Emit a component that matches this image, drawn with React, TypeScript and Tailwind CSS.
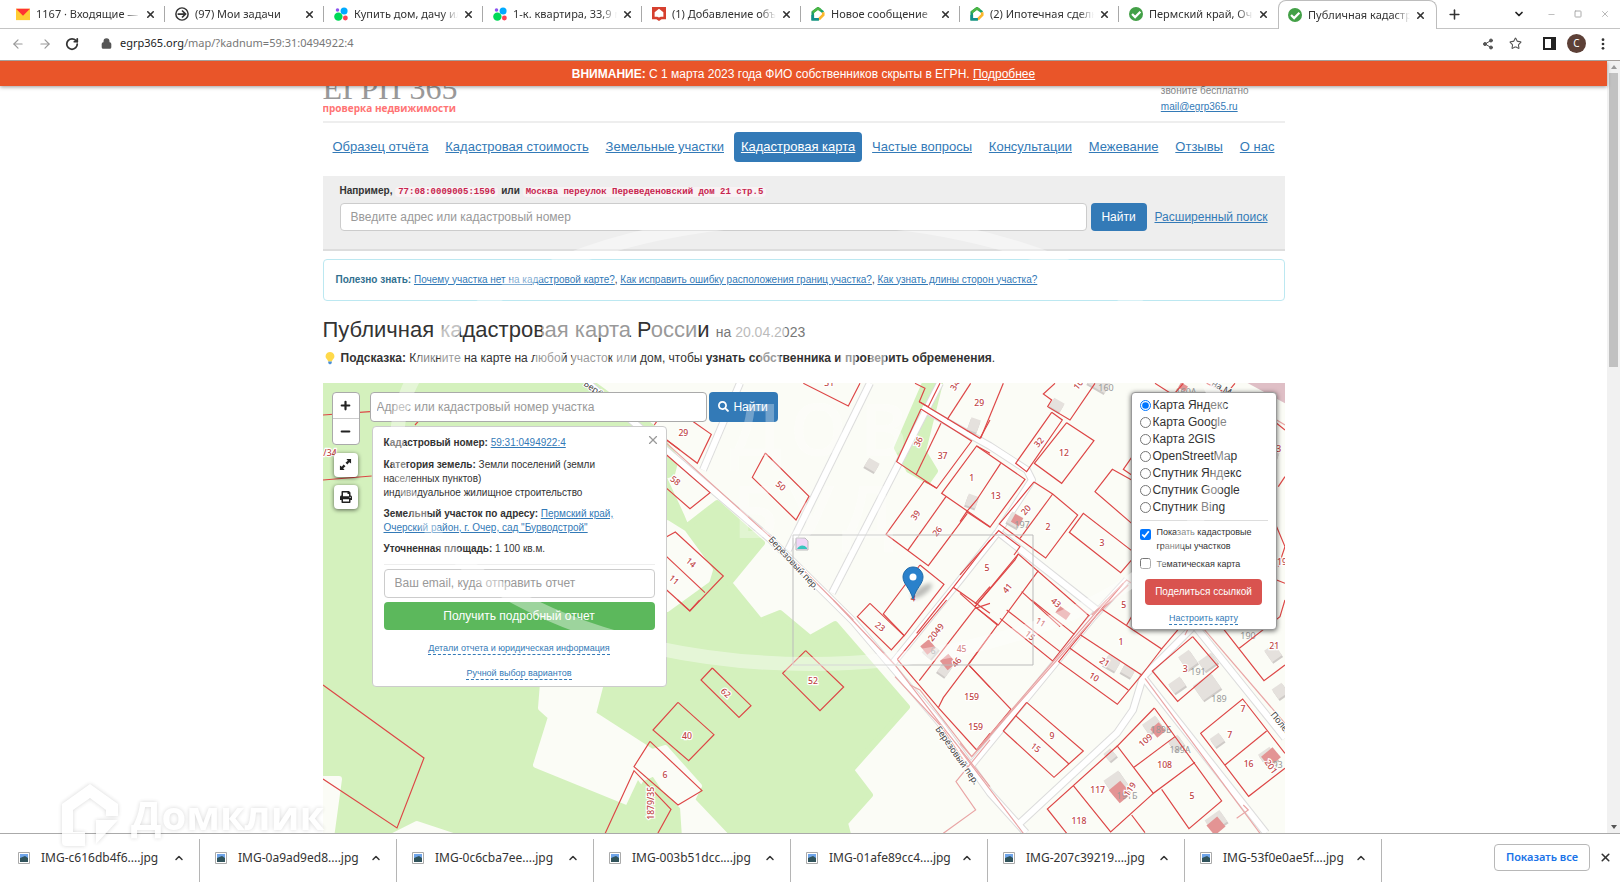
import type { ReactNode } from "react";
import { ArrowLeft, ArrowRight, ChevronDown, ChevronUp, Lock, Minus, Plus, RotateCw, Share2, Square, Star, X } from "lucide-react";
import { FaPrint, FaSearch } from "react-icons/fa";

const tabs = [
  { icon: "mail", label: "1167 · Входящие — Я" },
  { icon: "task", label: "(97) Мои задачи" },
  { icon: "avito", label: "Купить дом, дачу ил" },
  { icon: "avito", label: "1-к. квартира, 33,9 м" },
  { icon: "cian", label: "(1) Добавление объ" },
  { icon: "dom", label: "Новое сообщение" },
  { icon: "dom", label: "(2) Ипотечная сделк" },
  { icon: "check", label: "Пермский край, Оче" },
  { icon: "check", label: "Публичная кадастро", active: true },
];

const nav = [
  "Образец отчёта",
  "Кадастровая стоимость",
  "Земельные участки",
  "Кадастровая карта",
  "Частые вопросы",
  "Консультации",
  "Межевание",
  "Отзывы",
  "О нас",
];

const layers = ["Карта Яндекс", "Карта Google", "Карта 2GIS", "OpenStreetMap", "Спутник Яндекс", "Спутник Google", "Спутник Bing"];

const downloads = [
  "IMG-c616db4f6....jpg",
  "IMG-0a9ad9ed8....jpg",
  "IMG-0c6cba7ee....jpg",
  "IMG-003b51dcc....jpg",
  "IMG-01afe89cc4....jpg",
  "IMG-207c39219....jpg",
  "IMG-53f0e0ae5f....jpg",
];

const roads = [
  "265,0 337,62 447,156 530,238 570,285 617,340 667,410 703,450",
  "417,0 380,87",
  "547,0 465,167",
  "617,0 509,210",
  "599,25 667,63 704,87 709,97 675,149 637,197 570,280",
  "675,149 774,227",
  "804,197 770,234 647,384",
  "697,440 794,350 810,327 820,294 867,247 900,200",
  "868,238 962,355",
  "820,294 943,450",
];

type Tile = { x: number; y: number; plots: string[]; soft?: string[]; labels: [number, number, string, number?][] };

// plot outlines, three units to a screen pixel inside each tile
const tiles: Tile[] = [
  {
    x: -3, y: -3,
    plots: ["9,105 150,95", "9,300 155,288", "285,135 297,122", "1003,135 1012,122", "1040,180 1080,210", "9,915 312,1134 231,1344 9,1197"],
    labels: [[30, 218, "/34"], [1066, 302, "58", 38]],
  },
  {
    x: 337, y: -3,
    plots: [
      "430,10 565,78 600,10",
      "100,125 154,163 112,250 20,180",
      "20,225 150,338 90,386 20,325",
      "316,219 447,349 408,420 277,292 316,219",
      "20,470 46,456 190,588 90,693 20,630",
      "20,530 135,638",
      "765,10 795,25 778,65 805,80 840,10",
      "862,118 932,10",
      "778,65 960,175 990,120",
      "783,87 710,245 830,325 935,183 783,87",
      "843,130 768,285",
      "990,220 950,198 845,340 990,440",
      "793,303 678,463 805,557 922,400",
      "830,325 793,303",
      "858,350 743,512",
      "780,555 852,613 733,767 670,702 780,555",
      "990,480 880,622 990,700",
      "880,622 770,760",
      "945,672 990,620",
    ],
    soft: ["20,190 330,470 580,720"],
    labels: [
      [70, 160, "29"], [362, 318, "50", 40], [93, 548, "14", 40], [42, 600, "11", 40],
      [775, 185, "36", -65], [885, 16, "34", -60], [958, 68, "29"], [848, 227, "37"], [935, 295, "1"], [767, 406, "39", -55],
      [832, 454, "26", -50], [981, 563, "5"], [760, 655, "4", 10], [508, 10, "31"],
    ],
  },
  {
    x: 637, y: -3,
    plots: [
      "62,175 130,10",
      "285,10 250,42 275,60 263,80 330,120 405,10",
      "275,97 307,120 200,275 167,250 275,97",
      "320,128 402,182 305,310 223,250 320,128",
      "0,425 20,395 50,360 122,250",
      "50,198 195,298 90,442 20,395",
      "222,306 278,342 353,405 257,534 118,432 222,306",
      "278,342 180,475",
      "515,512 370,400 328,457 482,578 515,540",
      "515,300 457,268 405,335 515,430",
      "515,232 490,268 515,285",
      "585,10 640,45 670,10",
      "740,10 800,40 825,10",
      "0,585 116,452 180,500 162,525",
      "388,708 175,522 45,680 0,640",
      "175,522 165,540 45,680 115,735 235,572",
      "185,635 300,740",
      "425,687 490,610",
      "950,130 975,150",
      "955,320 975,290",
      "950,600 975,610",
      "950,440 975,500 955,560",
    ],
    soft: ["395,705 500,600 515,610", "410,705 505,615", "950,120 975,135"],
    labels: [
      [312, 220, "12"], [237, 187, "32", -50], [107, 347, "13"], [198, 390, "20", -50], [264, 441, "2"], [426, 490, "3"],
      [142, 625, "41", -50], [288, 668, "43", 40], [491, 674, "5"], [355, 14, "10", -50], [966, 545, "19"], [956, 206, "3"],
    ],
  },
  {
    x: 337, y: 217,
    plots: [
      "53,0 89,33 119,0",
      "630,10 732,107 694,150 592,50 630,10",
      "712,178 860,0",
      "945,25 778,242",
      "712,178 835,323 950,450 990,400",
      "990,105 925,193 850,293 835,323",
      "925,193 990,262",
      "437,152 551,261 480,332 368,220 437,152",
      "157,204 273,317 237,352 123,240 157,204",
      "54,307 162,404 86,482 -21,390 54,307",
      "-30,424 126,572 54,615 -78,500 -30,424",
      "-169,710 -78,512 33,628 -12,710",
      "990,10 945,25",
    ],
    soft: ["520,0 705,195 840,370 990,560", "705,230 840,375 930,510", "850,700 947,630 888,545 990,420", "750,255 780,270 935,470 990,410"],
    labels: [
      [660, 80, "23", 38], [828, 97, "2049", -52], [905, 147, "45"], [890, 187, "46", -52], [935, 292, "159"], [947, 381, "159"],
      [459, 242, "52"], [197, 279, "62", 42], [81, 407, "40"], [15, 524, "6"], [-28, 610, "1879/35", -90],
    ],
  },
  {
    x: 637, y: 217,
    plots: [
      "215,0 343,103",
      "387,45 278,183 120,55",
      "140,30 300,155",
      "45,20 112,75 28,190",
      "425,27 605,147 545,225 472,313 296,185 425,27",
      "362,105 545,225",
      "330,145 505,270",
      "605,147 672,68",
      "500,75 515,50",
      "28,197 153,328 52,450",
      "200,307 370,453 282,532 130,393 200,307",
      "167,347 327,492",
      "698,110 775,200 653,304 577,213 698,110",
      "785,80 912,242 975,195",
      "838,145 960,50 975,0",
      "975,460 848,297 722,400 866,589 975,505",
      "795,495 920,393",
      "583,324 785,603 687,686 605,568",
      "583,324 472,438 580,580 705,487",
      "522,502 645,410",
      "472,438 262,627 320,700",
      "340,557 452,696 580,580",
      "515,645 555,698",
    ],
    soft: ["555,235 900,700", "450,0 35,470 0,430", "440,0 50,450", "730,85 975,370", "675,105 685,85 725,85", "0,450 190,700", "830,655 865,630 850,615"],
    labels: [
      [483, 126, "1"], [434, 186, "21", 32], [402, 231, "10", 32], [242, 67, "11", 32], [210, 107, "15", 40], [276, 408, "9"],
      [227, 443, "15", 38], [676, 207, "3"], [943, 138, "21"], [849, 327, "7"], [809, 405, "7"], [866, 491, "16"], [557, 421, "109", -42],
      [614, 495, "108"], [413, 569, "117"], [357, 662, "118"], [696, 587, "5"], [933, 500, "201", 55], [510, 568, "119", -55],
    ],
  },
];

// [x, y, width, height, angle]
const houses: [number, number, number, number, number][] = [
  [549, 82, 12, 10, 30], [651, 42, 10, 13, 20], [649, 118, 11, 12, 20], [734, 22, 12, 10, 30], [776, 0, 20, 12, 30],
  [692, 137, 13, 12, 30], [607, 268, 13, 11, -50], [622, 286, 10, 13, 35], [789, 280, 14, 12, 30], [805, 288, 12, 9, 30],
  [865, 277, 13, 16, -35], [885, 279, 16, 12, -35], [854, 302, 14, 11, -35], [884, 304, 22, 18, -35], [917, 228, 18, 14, -35],
  [894, 357, 11, 10, -35], [787, 372, 9, 10, -40], [793, 400, 18, 18, -35], [829, 342, 16, 12, -35], [853, 360, 12, 12, -35],
  [950, 270, 12, 14, -35], [957, 308, 12, 12, -35], [945, 374, 14, 15, -35], [893, 438, 18, 14, -35], [950, 70, 12, 16, 20],
];

const ruins: [number, number, number, number, number][] = [
  [694, 137, 9, 9, 30], [740, 230, 13, 8, 35], [605, 264, 11, 11, -40], [625, 279, 11, 12, -40],
  [835, 347, 11, 11, -40], [797, 409, 15, 17, -40], [948, 374, 15, 13, -40], [893, 443, 14, 13, -40], [860, 4, 8, 6, 30],
];

const houseNumbers: [number, number, string][] = [
  [783, 5, "160"], [863, 9, "160А"], [699, 142, "197"], [610, 268, "6"], [875, 289, "191"], [896, 316, "189"], [925, 253, "190"],
  [838, 347, "189Б"], [857, 367, "189А"], [804, 413, "191Б"], [952, 382, "193"],
];

function Favicon({ name }: { name: string }) {
  return (
    <svg viewBox="0 0 16 16" className="size-[14px] shrink-0">
      {name === "mail" && (
        <>
          <path d="M0 2h16v13H0z" fill="#fc3" />
          <path d="M0 2h16L8 10z" fill="#f33" />
        </>
      )}
      {name === "task" && (
        <g fill="none" stroke="#333" strokeWidth="1.7">
          <circle cx="8" cy="8" r="7" />
          <path d="M3 8h8M8 4l4 4-4 4" strokeWidth="2" />
        </g>
      )}
      {name === "avito" && (
        <>
          <circle cx="5" cy="11" r="4.8" fill="#00d957" />
          <circle cx="11.5" cy="4.5" r="4" fill="#00aaff" />
          <circle cx="13" cy="12.5" r="2.8" fill="#ff4053" />
          <circle cx="4" cy="3.5" r="2" fill="#8b52ee" />
        </>
      )}
      {name === "cian" && (
        <>
          <path d="M0 0h16v14h-5l-3 2-3-2H0z" fill="#d6402f" />
          <path d="M8 2l5 4v5h-3l-2 1-2-1H3V6z" fill="#fff" />
        </>
      )}
      {name === "dom" && (
        <g fill="none" strokeWidth="3">
          <path d="M9 14H2V6l6-4.500 6 4.500" stroke="#1aa068" />
          <path d="M2 6l6-4.500 3 2" stroke="#4bb543" />
          <path d="M14 6v3l-5 5" stroke="#fbb72c" />
          <path d="M2 9v5h7" stroke="#128f8b" />
        </g>
      )}
      {name === "check" && (
        <>
          <circle cx="8" cy="8" r="8" fill="#43a047" />
          <path d="M3.500 8l3.500 3.500 6-6" fill="none" stroke="#fff" strokeWidth="2.600" />
        </>
      )}
    </svg>
  );
}

function TabStrip() {
  return (
    <div className="flex h-[29px] items-end border-b border-[#c4c4c4] px-1.5">
      <div className="flex min-w-0 flex-1">
        {tabs.map((tab, i) => (
          <div
            key={i}
            className={
              tab.active
                ? "-mb-px flex h-[29px] w-[159px] items-center rounded-t-lg border border-b-0 border-[#bdbdbd] bg-white pl-[9px] pr-1.5"
                : "flex h-[28px] w-[159px] items-center pl-2.5"
            }
          >
            <Favicon name={tab.icon} />
            <span className="ml-1.5 flex-1 overflow-hidden whitespace-nowrap text-[11px] [mask-image:linear-gradient(to_right,#000_85%,transparent)]">{tab.label}</span>
            <button aria-label="Закрыть вкладку" className="flex w-5 shrink-0 justify-center">
              <X className="size-[11px]" strokeWidth={3.500} />
            </button>
            {!tab.active && <span className={i === 7 ? "ml-1 h-4 w-px" : "ml-1 h-4 w-px bg-[#a8a8a8]"} />}
          </div>
        ))}
        <button aria-label="Новая вкладка" className="ml-2.5 flex h-[28px] items-center">
          <Plus className="size-[15px]" strokeWidth={2.500} />
        </button>
      </div>
      <div className="flex h-[28px] items-center gap-[18px] pr-1 text-[#aaa]">
        <ChevronDown className="mr-1 size-3 text-[#222]" strokeWidth={3.500} />
        <Minus className="size-[9px]" />
        <Square className="size-[8px]" strokeWidth={3} />
        <X className="size-[10px]" />
      </div>
    </div>
  );
}

function Toolbar() {
  return (
    <div className="flex h-8 items-center border-b border-[#a5a09c] px-[11px] pb-0.5">
      <div className="flex items-center gap-[13px]">
        <ArrowLeft className="size-[14px] text-[#999]" />
        <ArrowRight className="size-[14px] text-[#999]" />
        <RotateCw className="size-[14px]" strokeWidth={3} />
      </div>
      <Lock className="ml-[22px] size-[11px] text-[#555]" fill="#555" strokeWidth={3} />
      <span className="ml-2 text-[11px] text-[#777]">
        <span className="text-[#222]">egrp365.org</span>/map/?kadnum=59:31:0494922:4
      </span>
      <div className="ml-auto flex items-center gap-[15px]">
        <Share2 className="size-3 text-[#555]" fill="#555" />
        <Star className="size-[13px] text-[#555]" />
        <svg viewBox="0 0 13 13" className="ml-1.5 size-[13px]">
          <path d="M1 1h11v11H1z" fill="none" stroke="#222" strokeWidth="2" />
          <path d="M8 1h4v11H8z" fill="#222" />
        </svg>
        <span className="-ml-1 flex size-[19px] items-center justify-center rounded-full bg-[#5d4037] text-[10px] text-white">C</span>
        <svg viewBox="0 0 4 14" className="mr-1 h-3 w-[4px]" fill="#333">
          <circle cx="2" cy="2" r="1.600" />
          <circle cx="2" cy="7" r="1.600" />
          <circle cx="2" cy="12" r="1.600" />
        </svg>
      </div>
    </div>
  );
}

function A({ children, className = "" }: { children: ReactNode; className?: string }) {
  return (
    <a href="#" className={`text-[#337ab7] underline ${className}`}>
      {children}
    </a>
  );
}

function MapCanvas() {
  return (
    <svg viewBox="0 0 962 450" preserveAspectRatio="xMidYMin slice" className="block h-full w-full bg-[#fbfcf6]" fontFamily="'Noto Sans', sans-serif">
      <g fill="#d4f1bd" stroke="#d4f1bd" strokeWidth="6" strokeLinejoin="round">
        <path d="M-5-5H262L330 45L353 75L349 91L340 93L358 132L363 144L394 120L439 160L406 200L437 238L457 230L487 255L512 241L584 324L528 387L547 412L522 440L526 455H-5z" />
        <path d="M602 0L574 65L586 87L605 98L612 88L600 68L617 0z" />
      </g>
      <g fill="#fbfcf6" stroke="#fbfcf6" strokeWidth="6" strokeLinejoin="round">
        <path d="M220 300H278L270 331L329 369L342 365L376 403L369 417L405 455H362L360 424L341 405L331 390L318 396L304 419L213 382L228 334L218 325z" />
        <path d="M-4 396H16L8 455H-4zM70 453L94 441L130 453z" />
        <path d="M300 140H344L360 150L387 187L384 197L344 226H300z" />
      </g>
      <path d="M315 397L352 450H290z" fill="#d4f1bd" />
      <path d="M919-3H965V22z" fill="#dfbfc6" />

      <g fill="none" strokeLinejoin="round">
        {roads.map((r) => <polyline key={r} points={r} stroke="#dcdcdc" strokeWidth="8" />)}
        {roads.map((r) => <polyline key={r} points={r} stroke="#fff" strokeWidth="6" />)}
      </g>

      {houses.map(([x, y, w, h, a], i) => (
        <g key={i} transform={`rotate(${a} ${x} ${y})`}>
          <rect x={x - w / 2} y={y - h / 2 + 2} width={w} height={h} fill="#cfcbc8" />
          <rect x={x - w / 2} y={y - h / 2} width={w} height={h} fill="#e5e1dd" />
        </g>
      ))}
      {ruins.map(([x, y, w, h, a], i) => (
        <rect key={i} x={x - w / 2} y={y - h / 2} width={w} height={h} fill="#e39494" transform={`rotate(${a} ${x} ${y})`} />
      ))}
      <g fill="#999" fontSize="9" textAnchor="middle">
        {houseNumbers.map(([x, y, n]) => <text key={n + x} x={x} y={y + 3}>{n}</text>)}
      </g>

      {tiles.map((t, i) => (
        <g key={i} transform={`translate(${t.x} ${t.y}) scale(0.3333)`}>
          <g fill="none" stroke="#dd4646" strokeWidth="3.500">
            {t.plots.map((p) => <polyline key={p} points={p} />)}
          </g>
          <g fill="none" stroke="#e9a5a5" strokeWidth="3.500">
            {t.soft?.map((p) => <polyline key={p} points={p} />)}
          </g>
          <g fill="#c04545" stroke="#fff" strokeWidth="7" paintOrder="stroke" fontSize="26" fontWeight="500" textAnchor="middle">
            {t.labels.map(([x, y, text, a = 0]) => (
              <text key={`${x}-${y}`} x={x} y={y + 9} transform={`rotate(${a} ${x} ${y})`}>{text}</text>
            ))}
          </g>
        </g>
      ))}

      <g fill="#444" stroke="#fff" strokeWidth="2" paintOrder="stroke" fontSize="9">
        <text transform="translate(445 157) rotate(47)">Берёзовый пер.</text>
        <text transform="translate(612 346) rotate(55)">Берёзовый пер.</text>
        <text transform="translate(947 332) rotate(50)">Полевая</text>
        <text transform="translate(260 2) rotate(35)">Берёз.</text>
        <text transform="translate(888 2) rotate(30)">на М</text>
      </g>

      <path d="M470 152h240v130H470z" fill="none" stroke="#bbb" />
      <path d="M473 155h9l3 3v9h-12z" fill="#efd6f5" stroke="#bbb" />
      <path d="M474 166c2-4 7-5 10-1v1z" fill="#36c5bd" />

      <ellipse cx="599" cy="208" rx="12" ry="4" fill="#000" opacity=".25" transform="rotate(-35 599 208)" className="[filter:blur(2px)]" />
      <path d="M590 184c-6 0-10 5-10 10 0 7 7 11 10 22 3-11 10-15 10-22 0-5-4-10-10-10z" fill="#2a81cb" stroke="#1f6aa8" />
      <circle cx="590" cy="194" r="3.500" fill="#fff" />
    </svg>
  );
}

function ParcelPanel() {
  return (
    <div className="relative ml-0.5 mt-1 w-[295px] rounded-sm border border-[#ccc] bg-white px-[11px] pb-1.5 pt-[9px] text-[10px] leading-[14px]">
      <button aria-label="Закрыть" className="absolute right-1.5 top-1.5 text-[#999]">
        <X className="size-[14px]" strokeWidth={2} />
      </button>
      <p><b>Кадастровый номер:</b> <A>59:31:0494922:4</A></p>
      <p className="mt-2 pr-10"><b>Категория земель:</b> Земли поселений (земли населенных пунктов)<br />индивидуальное жилищное строительство</p>
      <p className="mt-[7px] pr-8"><b>Земельный участок по адресу:</b> <A>Пермский край, Очерский район, г. Очер, сад "Бурводстрой"</A></p>
      <p className="mt-[7px]"><b>Уточненная площадь:</b> 1 100 кв.м.</p>
      <form className="mt-2 border-t border-[#eee] pt-1" onSubmit={(e) => e.preventDefault()}>
        <input type="email" aria-label="Ваш email" placeholder="Ваш email, куда отправить отчет" className="h-[29px] w-full rounded-sm border border-[#ccc] px-2.5 text-[12px] placeholder:text-[#999]" />
        <button className="mt-1 h-7 w-full rounded-sm bg-[#5cb85c] text-[12px] text-white">Получить подробный отчет</button>
      </form>
      <div className="mt-3 flex flex-col items-center gap-3 text-[9px] leading-[12px]">
        <a href="#" className="border-b border-dashed border-[#337ab7] text-[#337ab7]">Детали отчета и юридическая информация</a>
        <a href="#" className="border-b border-dashed border-[#337ab7] text-[#337ab7]">Ручной выбор вариантов</a>
      </div>
    </div>
  );
}

function LayerPanel() {
  return (
    <div className="w-[146px] rounded border border-[#999] bg-white px-2 pb-1 pt-1 shadow-[0_1px_5px_rgba(0,0,0,0.6)]">
      {layers.map((l, i) => (
        <label key={l} className="flex h-[17px] items-center gap-0.5 text-[12px]">
          <input type="radio" name="layer" defaultChecked={i === 0} className="m-0 size-[11px]" />
          {l}
        </label>
      ))}
      <div className="mt-1 border-t border-[#ddd] pt-1 text-[9px] leading-[14px]">
        <label className="flex items-start gap-1.5">
          <input type="checkbox" defaultChecked className="m-0 mt-1 size-[11px] shrink-0" />
          <span>Показать кадастровые границы участков</span>
        </label>
        <label className="mt-1 flex items-center gap-1.5">
          <input type="checkbox" className="m-0 size-[11px] shrink-0" />
          Тематическая карта
        </label>
      </div>
      <div className="mt-2 flex flex-col items-center gap-[7px]">
        <button className="h-[26px] w-[117px] rounded-sm bg-[#d9534f] text-[10px] text-white">Поделиться ссылкой</button>
        <a href="#" className="border-b border-dashed border-[#337ab7] text-[9px] leading-[12px] text-[#337ab7]">Настроить карту</a>
      </div>
    </div>
  );
}

function MapSection() {
  return (
    <section className="relative mt-[17px] h-[450px] overflow-hidden">
      <MapCanvas />
      <div className="absolute inset-x-2 top-[9px] flex items-start">
        <div className="ml-px flex w-7 flex-col items-center gap-2 text-[#222]">
          <div className="w-7 rounded border border-[#aaa] bg-white">
            <button aria-label="Приблизить" className="flex h-[26px] w-full items-center justify-center border-b border-[#ccc]"><Plus className="size-[13px]" strokeWidth={4} /></button>
            <button aria-label="Отдалить" className="flex h-[25px] w-full items-center justify-center"><Minus className="size-[13px]" strokeWidth={4} /></button>
          </div>
          <button aria-label="На весь экран" className="flex size-6 items-center justify-center rounded bg-white shadow-[0_1px_4px_rgba(0,0,0,0.6)]">
            <svg viewBox="0 0 14 14" className="size-[13px]" fill="#222">
              <path d="M8 1h5v5l-2-1.500L9 7 7 5l2.500-2zM6 13H1V8l2 1.500L5 7l2 2-2.500 2z" />
            </svg>
          </button>
          <button aria-label="Печать" className="flex size-6 items-center justify-center rounded bg-white shadow-[0_1px_4px_rgba(0,0,0,0.6)]"><FaPrint className="size-3" /></button>
        </div>
        <div className="ml-2.5 flex-1">
          <div className="flex gap-0.5">
            <input aria-label="Адрес или кадастровый номер участка" placeholder="Адрес или кадастровый номер участка" className="h-[30px] w-[337px] rounded-sm border border-[#aaa] bg-white px-1.5 text-[12px] placeholder:text-[#999]" />
            <button className="flex h-[30px] w-[69px] items-center justify-center gap-1 rounded-sm bg-[#337ab7] text-[12px] text-white">
              <FaSearch className="size-[11px]" />
              Найти
            </button>
          </div>
          <ParcelPanel />
        </div>
        <LayerPanel />
      </div>
    </section>
  );
}

function Watermark() {
  return (
    <svg viewBox="0 0 1620 882" className="pointer-events-none absolute inset-0 h-full w-full" fontFamily="'Open Sans', sans-serif" fill="#fff">
      <ellipse cx="810" cy="441" rx="413" ry="223" fill="none" stroke="#fff" strokeWidth="14" opacity=".4" />
      <g opacity=".5">
        <path d="M440 312h20v55h-20zM542 312h88v26h-88zM650 312h46v26h-46zM735 312h50v26h-50zM535 348h28v20h-28zM572 348h36v20h-36zM612 348h20v20h-20zM760 348h20v20h-20zM840 348h16v20h-16zM870 348h16v20h-16z" />
      </g>
      <g opacity=".3" fontSize="72" fontWeight="600">
        <text x="730" y="456">Д</text>
        <text x="790" y="456">О</text>
        <text x="860" y="456">В</text>
        <text x="733" y="538">Б</text>
        <text x="788" y="538">У</text>
        <text x="842" y="538">Д</text>
      </g>
      <g opacity=".8" className="[filter:drop-shadow(0_0_2px_rgba(0,0,0,0.2))]">
        <path d="M90 784l28 20v12H106v-6l-16-12-17 12v22h12v14H66q-4 0-4-4V804zM96 820h22l-22 24z" />
        <text x="131" y="830" fontSize="40" fontWeight="700">Домклик</text>
      </g>
    </svg>
  );
}

function Downloads() {
  return (
    <footer className="flex h-[49px] items-end border-t border-[#aaa] bg-white pl-[3px]">
      {downloads.map((name) => (
        <div key={name} className="flex h-[43px] w-[197px] shrink items-center border-r border-[#b5b5b5] pb-1.5 pl-[15px] pr-3.5">
          <svg viewBox="0 0 12 12" className="size-3 shrink-0">
            <path d="M.5.5h11v11H.5z" fill="#fff" stroke="#aaa" />
            <path d="M2 2h8v4H2z" fill="#6fa5ea" />
            <path d="M2 6l5-2 3 2v4H2z" fill="#31545c" />
          </svg>
          <span className="ml-[11px] flex-1 whitespace-nowrap text-[12px]">{name}</span>
          <button aria-label="Действия"><ChevronUp className="size-3" strokeWidth={3} /></button>
        </div>
      ))}
      <div className="ml-auto flex h-[43px] items-center gap-[9px] pb-1.5 pr-2">
        <button className="h-[27px] w-24 rounded border border-[#b8b8b8] text-[11px] font-semibold text-[#1a73e8]">Показать все</button>
        <button aria-label="Закрыть"><X className="size-[13px]" strokeWidth={3} /></button>
      </div>
    </footer>
  );
}

export default function App() {
  return (
    <div className="relative flex h-screen flex-col overflow-hidden bg-white font-['Noto_Sans',sans-serif] text-[#333]">
      <TabStrip />
      <Toolbar />
      <div className="flex min-h-0 flex-1 overflow-hidden font-['Liberation_Sans',Arial,sans-serif]">
        <main className="min-w-0 flex-1">
          <div className="relative h-[25px] bg-[#e95529] text-center text-[12px] leading-[26px] text-white shadow-[0_1px_4px_rgba(0,0,0,0.4)]">
            <b>ВНИМАНИЕ:</b> С 1 марта 2023 года ФИО собственников скрыты в ЕГРН. <a href="#" className="underline">Подробнее</a>
          </div>
          <div className="mx-auto max-w-[962px]">
            <header className="flex h-[37px] items-end justify-between overflow-hidden border-b-2 border-[#eee] pb-1.5">
              <div>
                <div className="font-['Liberation_Serif',serif] text-[32px] leading-[26px] text-[#999]">ЕГРП 365</div>
                <div className="font-['Open_Sans',sans-serif] text-[10px] font-bold leading-[14px] text-[#ff7474]">проверка недвижимости</div>
              </div>
              <div className="mr-9 text-[10px] leading-4 text-[#888]">
                звоните бесплатно<br />
                <A>mail@egrp365.ru</A>
              </div>
            </header>

            <nav className="mt-[9px] flex items-center justify-between px-[3px] text-[13px]">
              {nav.map((item) => (
                <a key={item} href="#" className={item === "Кадастровая карта" ? "rounded bg-[#337ab7] px-[7px] py-[5px] text-white underline" : "px-[7px] py-[5px] text-[#337ab7] underline"}>
                  {item}
                </a>
              ))}
            </nav>

            <form className="mt-3.5 h-[75px] border-b-2 border-[#ddd] bg-[#eee] px-[17px] pt-2" onSubmit={(e) => e.preventDefault()}>
              <label htmlFor="q" className="block text-[10px] font-bold leading-[14px]">
                Например, <code className="rounded bg-[#f9f2f4] px-[3px] font-['Liberation_Mono',monospace] text-[9px] text-[#c7254e]">77:08:0009005:1596</code> или{" "}
                <code className="rounded bg-[#f9f2f4] px-[3px] font-['Liberation_Mono',monospace] text-[9px] text-[#c7254e]">Москва переулок Переведеновский дом 21 стр.5</code>
              </label>
              <div className="mt-1 flex items-center text-[12px]">
                <input id="q" placeholder="Введите адрес или кадастровый номер" className="h-7 flex-1 rounded border border-[#ccc] bg-white px-2.5 placeholder:text-[#999]" />
                <button className="ml-1 h-7 w-14 rounded bg-[#337ab7] text-white">Найти</button>
                <A className="ml-2">Расширенный поиск</A>
              </div>
            </form>

            <div className="mt-2 rounded border border-[#bce8f1] px-3 py-[11px] text-[10px] leading-[18px]">
              <b className="text-[#31708f]">Полезно знать:</b> <A>Почему участка нет на кадастровой карте?</A>, <A>Как исправить ошибку расположения границ участка?</A>, <A>Как узнать длины сторон участка?</A>
            </div>

            <h1 className="mt-4 text-[22px] leading-[26px]">
              Публичная кадастровая карта России <small className="text-[14px] text-[#777]">на 20.04.2023</small>
            </h1>
            <p className="mt-[5px] flex items-center gap-1 text-[12px] leading-4">
              <svg viewBox="0 0 14 16" className="h-[14px] w-[14px]">
                <path d="M7 1a5 5 0 0 0-3 9l1 2h4l1-2a5 5 0 0 0-3-9z" fill="#ffd94a" />
                <path d="M5 12h4v2l-2 1.500L5 14z" fill="#4a90d9" />
              </svg>
              <span><b>Подсказка:</b> Кликните на карте на любой участок или дом, чтобы <b>узнать собственника и проверить обременения</b>.</span>
            </p>
            <MapSection />
          </div>
        </main>
        <div className="flex w-[13px] flex-col items-center bg-[#f1f1f1]">
          <span className="mt-1 border-x-[3px] border-b-4 border-x-transparent border-b-[#999]" />
          <span className="mt-1 h-[294px] w-[9px] bg-[#c1c1c1]" />
          <span className="mb-1 mt-auto border-x-[3px] border-t-4 border-x-transparent border-t-[#555]" />
        </div>
      </div>
      <Downloads />
      <Watermark />
    </div>
  );
}
